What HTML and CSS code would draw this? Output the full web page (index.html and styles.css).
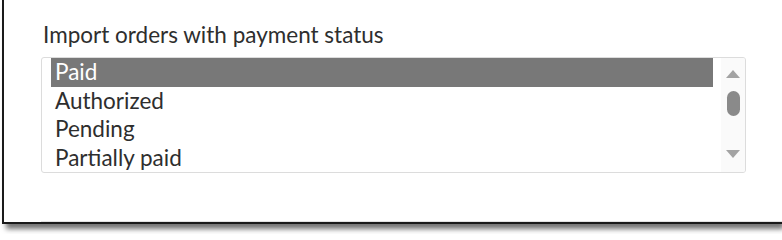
FILE: index.html
```html
<!DOCTYPE html>
<html>
<head>
<meta charset="utf-8">
<link rel="stylesheet" href="styles.css">
</head>
<body>
<div class="panel">
  <div class="section">
    <div class="label">Import orders with payment status</div>
    <div class="listbox">
      <div class="options">
        <div class="option selected">Paid</div>
        <div class="option">Authorized</div>
        <div class="option">Pending</div>
        <div class="option">Partially paid</div>
      </div>
      <div class="scrollbar">
        <svg class="arrow" width="14" height="8" viewBox="0 0 14 8"><polygon points="7,0 14,8 0,8" fill="#a3a3a3"/></svg>
        <div class="thumb"></div>
        <div class="spacer"></div>
        <svg class="arrow" width="14" height="8" viewBox="0 0 14 8"><polygon points="0,0 14,0 7,8" fill="#a3a3a3"/></svg>
      </div>
    </div>
  </div>
</div>
</body>
</html>
```
FILE: styles.css
```css
html, body {
  margin: 0;
  padding: 0;
  background: #fff;
  width: 782px;
  height: 234px;
  overflow: hidden;
}
.panel {
  margin-left: 2px;
  width: 780px;
  height: 224px;
  border-left: 2px solid #1a1a1a;
  border-bottom: 2px solid #1a1a1a;
  box-shadow: 3px 6px 5px -1px rgba(0,0,0,0.55);
  background: #fff;
  box-sizing: border-box;
}
.section {
  margin-left: 37px;
  padding-top: 22px;
  height: 222px;
  box-sizing: border-box;
  border-bottom: 1px solid #e2e2e2;
  font-family: Lato, "Open Sans", sans-serif;
  color: #2e2e2e;
}
.label {
  font-size: 22.5px;
  line-height: 26px;
  margin-left: 2px;
}
.listbox {
  margin-top: 9px;
  width: 705px;
  height: 116px;
  box-sizing: border-box;
  border: 1px solid #dcdcdc;
  border-radius: 3px;
  display: flex;
  overflow: hidden;
}
.options {
  flex: 1;
  padding: 0 8px 0 9px;
}
.option {
  font-size: 22.5px;
  line-height: 28.5px;
  padding-left: 4px;
  color: #2e2e2e;
}
.option.selected {
  background: #787878;
  color: #fff;
}
.scrollbar {
  width: 24px;
  background: #fafafa;
  display: flex;
  flex-direction: column;
  align-items: center;
  padding: 12px 0 14px;
  box-sizing: border-box;
}
.arrow {
  display: block;
  flex: none;
}
.thumb {
  margin-top: 13px;
  width: 13px;
  height: 25px;
  border-radius: 7px;
  background: #8a8a8a;
}
.spacer {
  flex: 1;
}
```
